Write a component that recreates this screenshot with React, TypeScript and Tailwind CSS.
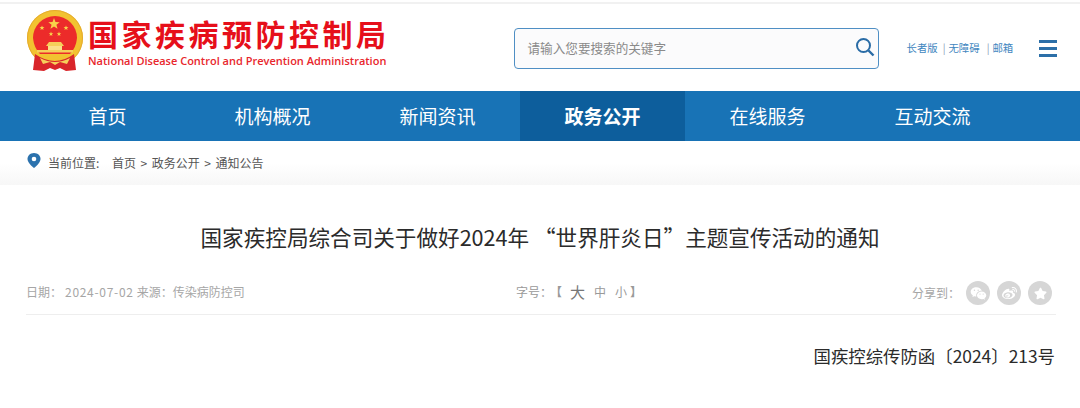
import React from 'react';
import { FaWeibo, FaStar } from 'react-icons/fa';
import { RiWechatFill } from 'react-icons/ri';

const cjk = "font-['Noto_Sans_CJK_SC','Noto_Sans',sans-serif]";

const navItems = ['首页', '机构概况', '新闻资讯', '政务公开', '在线服务', '互动交流'];

const Star = ({ x, y, r, fill = '#f8d34a' }: { x: number; y: number; r: number; fill?: string }) => {
  const pts: string[] = [];
  for (let i = 0; i < 10; i++) {
    const rad = i % 2 === 0 ? r : r * 0.42;
    const a = (Math.PI / 5) * i - Math.PI / 2;
    pts.push(`${x + rad * Math.cos(a)},${y + rad * Math.sin(a)}`);
  }
  return <polygon points={pts.join(' ')} fill={fill} />;
};

const Emblem = () => (
  <svg width="58" height="62" viewBox="0 0 58 62" className="shrink-0">
    {/* wheat ring */}
    <circle cx="29" cy="28" r="28" fill="#f2c230" />
    <circle cx="29" cy="28" r="27.500" fill="none" stroke="#e5aa2e" strokeWidth="1" />
    <path d="M7 28 A22 22 0 1 1 51 28 Q50 38 44 44 L14 44 Q8 38 7 28 Z" fill="#ec2b2a" />
    {/* stars */}
    <Star x={28} y={14} r={6} />
    <Star x={16} y={18} r={2.6} />
    <Star x={40} y={18} r={2.6} />
    <Star x={25} y={24} r={2.400} />
    <Star x={33} y={24} r={2.400} />
    {/* gate */}
    <path d="M23 32 L35 32 L38 36 L20 36 Z" fill="#f6cf5a" />
    <rect x="22" y="36" width="14" height="4" fill="#fbe08a" />
    <rect x="11" y="40" width="36" height="2.500" fill="#f6cf5a" />
    {/* ribbons */}
    <path d="M9 44 L7 60 L18 61 L24 58 L29 60 L34 58 L40 61 L50 60 L48 44 Q29 58 9 44 Z" fill="#d9252a" />
    <path d="M14 48 Q29 56 44 48 L41 54 L34 52 L29 55 L24 52 L17 54 Z" fill="#f6cf5a" />
  </svg>
);

const ShareBtn = ({ children }: { children: React.ReactNode }) => (
  <span className="w-6 h-6 rounded-full bg-[#d6d6d6] flex items-center justify-center text-white">{children}</span>
);

export default function App() {
  return (
    <div className={`w-[1080px] h-[408px] overflow-hidden bg-white ${cjk}`}>
      <div className="h-[4px] border-b-2 border-[#f1f1f1]" />

      {/* header */}
      <header className="h-[87px] flex items-start">
        <div className="ml-[26px] mt-[6px] flex items-start">
          <Emblem />
          <div className="ml-1 flex flex-col">
            <div className="h-[43px] text-[30px] leading-[46px] font-bold text-[#e60f1a] tracking-[3.5px] whitespace-nowrap">
              国家疾病预防控制局
            </div>
            <div className="text-[11px] leading-[16px] font-semibold text-[#e8262c] font-['Open_Sans',sans-serif] whitespace-nowrap">
              National Disease Control and Prevention Administration
            </div>
          </div>
        </div>

        <div className="ml-[124px] mt-[24px] w-[365px] h-[41px] rounded border border-[#4f8fc4] bg-[#fbfbfc] flex items-center justify-between pl-[13px] pr-[3px]">
          <span className="text-[12.6px] text-[#8a8a8a]">请输入您要搜索的关键字</span>
          <svg width="20" height="20" viewBox="0 0 20 20" fill="none" stroke="#2a6ca6" className="mb-1">
            <circle cx="8.500" cy="8.500" r="6.500" strokeWidth="2" />
            <path d="M13.500 13.500 L18.500 18.500" strokeWidth="2.400" />
          </svg>
        </div>

        <div className="ml-[28px] mt-[37px] w-[106px] flex items-center text-[10.4px] leading-[14px] text-[#3f86c0] whitespace-nowrap">
          <span>长者版</span>
          <span className="ml-[5px] mr-[3px] text-[#8d9db8]">|</span>
          <span>无障碍</span>
          <span className="ml-[7px] mr-[3px] text-[#8d9db8]">|</span>
          <span>邮箱</span>
        </div>

        <div className="ml-[26px] mt-[36px] w-[18px] flex flex-col gap-[4px]">
          <span className="h-[3px] w-[18px] bg-[#2c6fa8]" />
          <span className="h-[3px] w-[18px] bg-[#2c6fa8]" />
          <span className="h-[3px] w-[18px] bg-[#2c6fa8]" />
        </div>
      </header>

      {/* nav */}
      <nav className="h-[50px] bg-[#1873b6] pl-[25px] flex">
        {navItems.map((item) => (
          <div
            key={item}
            className={`w-[165px] flex items-center justify-center text-[19px] text-white ${item === '政务公开' ? 'bg-[#0d5e9c] font-bold' : ''}`}
          >
            {item}
          </div>
        ))}
      </nav>

      {/* breadcrumb */}
      <div className="h-[44px] pl-[27px] pt-[12px] flex items-start bg-gradient-to-b from-white from-50% to-[#f7f7f7] text-[12px] leading-[20px] text-[#555]">
        <svg width="14" height="15" viewBox="0 0 14 15" className="shrink-0">
          <path d="M7 0 C3 0 .5 2.800 .5 6 C.5 9.500 4.500 13 7 15 C9.500 13 13.500 9.500 13.500 6 C13.500 2.800 11 0 7 0 Z" fill="#2c72ad" />
          <circle cx="7" cy="6" r="2.300" fill="white" />
        </svg>
        <span className="ml-[7px] w-[64px]">当前位置:</span>
        <span>首页</span>
        <span className="mx-[4.5px]">&gt;</span>
        <span>政务公开</span>
        <span className="mx-[4.5px]">&gt;</span>
        <span>通知公告</span>
      </div>

      {/* article head */}
      <h1 className="mt-[37px] text-center text-[21.6px] leading-[30px] font-normal text-[#2b2b2b] whitespace-nowrap">
        国家疾控局综合司关于做好2024年 “世界肝炎日”主题宣传活动的通知
      </h1>

      <div className="mx-[26px] w-[1030px] mt-[26px] h-[37px] border-b border-[#eeeeee] flex items-start text-[12px] leading-[20px] text-[#a6a6a6]">
        <div className="w-[490px] pt-[4px] whitespace-nowrap">
          <span>日期：</span>
          <span className="tracking-[0.7px] ml-[3px]">2024-07-02</span>
          <span className="ml-[3px]">来源：传染病防控司</span>
        </div>
        <div className="flex items-center pt-[4px] text-[#999]">
          <span>字号：</span>
          <span className="-ml-[2px] mr-[8px] font-bold">【</span>
          <span className="text-[15px] text-[#777] mr-[9px]">大</span>
          <span className="mr-[9px]">中</span>
          <span>小</span>
          <span className="ml-[3px] font-bold">】</span>
        </div>
        <div className="ml-auto flex items-center gap-[7px] mt-[3px] pr-[4px]">
          <span className="-mr-[1px]">分享到：</span>
          <ShareBtn><RiWechatFill size={17} /></ShareBtn>
          <ShareBtn><FaWeibo size={15} /></ShareBtn>
          <ShareBtn><FaStar size={13} /></ShareBtn>
        </div>
      </div>

      <p className="mt-[28px] pr-[25px] text-right text-[17.4px] leading-[26px] text-[#2b2b2b]">
        国疾控综传防函〔2024〕213号
      </p>
    </div>
  );
}
